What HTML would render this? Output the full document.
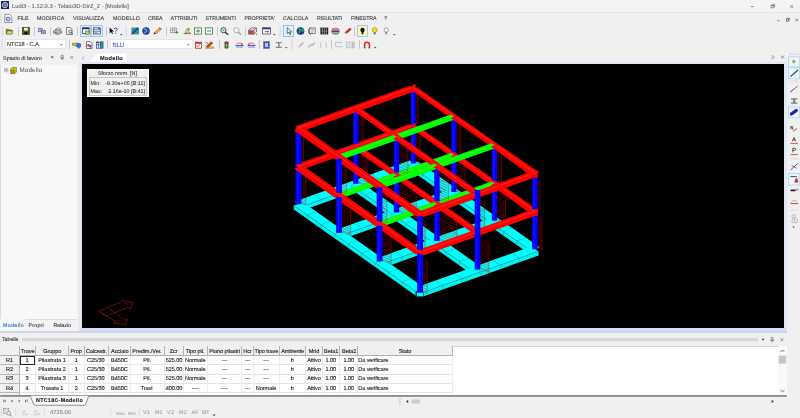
<!DOCTYPE html>
<html lang="it"><head><meta charset="utf-8"><title>Ludi3 - 1.12.0.3 - Telaio3D-DirZ_2 - [Modello]</title>
<style>
html,body{margin:0;padding:0;}
body{width:800px;height:418px;overflow:hidden;position:relative;background:#f0f0f1;font-family:"Liberation Sans",sans-serif;text-rendering:geometricPrecision;-webkit-font-smoothing:antialiased;}
div,span,svg,b,i{position:absolute;}
.t{white-space:pre;margin:0;padding:0;-webkit-text-stroke:0.12px currentColor;}
svg{overflow:visible;}
#wrap{left:0;top:0;width:800px;height:418px;overflow:hidden;will-change:transform;}
</style></head><body><div id="wrap">

<div style="left:0px;top:0px;width:800px;height:12.5px;background:#f4f4f5;"></div>
<div style="left:0px;top:12px;width:800px;height:0.8px;background:#e2e6f0;"></div>
<svg style="left:1px;top:1px" width="8" height="8" viewBox="0 0 8 8"><rect width="8" height="8" fill="#1c2466"/><circle cx="4" cy="4" r="2.6" fill="none" stroke="#d8dcf4" stroke-width="0.9"/><path d="M1.2 4H6.8M4 1.2V6.8" stroke="#d8dcf4" stroke-width="0.6"/></svg>
<span class="t" style="left:12px;top:3px;font-size:5.80px;line-height:8px;color:#6a6a6a;letter-spacing:0.023px;">Ludi3 - 1.12.0.3 - Telaio3D-DirZ_2 - [Modello]</span>
<svg style="left:740px;top:0" width="60" height="12" viewBox="0 0 60 12"><g stroke="#555" stroke-width="0.6" fill="none"><path d="M11 6.6h3"/><rect x="31" y="5.3" width="2.6" height="2.6"/><path d="M32 5.3v-0.9h2.6v2.6h-1"/><path d="M50.2 5l3 3M53.2 5l-3 3"/></g></svg>
<div style="left:0px;top:12.5px;width:800px;height:12.5px;background:#f0f0f1;"></div>
<svg style="left:0;top:13px" width="3" height="12" viewBox="0 0 3 12"><path d="M1 1v10" stroke="#b8b8c4" stroke-width="0.8" stroke-dasharray="0.8 0.8"/></svg>
<svg style="left:3.5px;top:14px" width="9" height="9" viewBox="0 0 9 9"><path d="M0.8 0.5h4.8l2.2 2.2v5.8h-7z" fill="#fff" stroke="#555" stroke-width="0.6"/><circle cx="4.2" cy="5" r="2" fill="#c8cdf0" stroke="#2a3490" stroke-width="0.7"/></svg>
<span class="t" style="left:17.6039px;top:15px;font-size:5.30px;line-height:8px;color:#444444;letter-spacing:-0.100px;">FILE</span>
<span class="t" style="left:37px;top:15px;font-size:5.30px;line-height:8px;color:#444444;letter-spacing:0.199px;">MODIFICA</span>
<span class="t" style="left:73px;top:15px;font-size:5.30px;line-height:8px;color:#444444;letter-spacing:0.066px;">VISUALIZZA</span>
<span class="t" style="left:113px;top:15px;font-size:5.30px;line-height:8px;color:#444444;letter-spacing:0.155px;">MODELLO</span>
<span class="t" style="left:148.087px;top:15px;font-size:5.30px;line-height:8px;color:#444444;letter-spacing:-0.100px;">CREA</span>
<span class="t" style="left:170.5px;top:15px;font-size:5.30px;line-height:8px;color:#444444;">ATTRIBUTI</span>
<span class="t" style="left:205.5px;top:15px;font-size:5.30px;line-height:8px;color:#444444;letter-spacing:-0.046px;">STRUMENTI</span>
<span class="t" style="left:244.377px;top:15px;font-size:5.30px;line-height:8px;color:#444444;letter-spacing:-0.100px;">PROPRIETA&#x27;</span>
<span class="t" style="left:283px;top:15px;font-size:5.30px;line-height:8px;color:#444444;letter-spacing:0.108px;">CALCOLA</span>
<span class="t" style="left:316.994px;top:15px;font-size:5.30px;line-height:8px;color:#444444;letter-spacing:-0.100px;">RISULTATI</span>
<span class="t" style="left:351.046px;top:15px;font-size:5.30px;line-height:8px;color:#444444;letter-spacing:-0.100px;">FINESTRA</span>
<span class="t" style="left:384.326px;top:15px;font-size:5.30px;line-height:8px;color:#444444;letter-spacing:-0.100px;">?</span>
<svg style="left:770px;top:14px" width="30" height="12" viewBox="0 0 30 12"><g stroke="#444" stroke-width="0.6" fill="none"><path d="M7.3 6.6h2.4"/><rect x="16.4" y="5" width="2.2" height="2.2"/><path d="M17.2 5v-0.8h2.2v2.2h-0.8"/><path d="M25.3 4.6l2.6 2.6M27.9 4.6l-2.6 2.6"/></g></svg>
<div style="left:0px;top:25px;width:800px;height:26.5px;background:#f0f0f1;"></div>
<svg style="left:1px;top:26px" width="3" height="11" viewBox="0 0 3 11"><path d="M1.2 0.5v10" stroke="#b4b4c0" stroke-width="0.9" stroke-dasharray="0.8 0.8"/></svg>
<svg style="left:1px;top:39px" width="3" height="11" viewBox="0 0 3 11"><path d="M1.2 0.5v10" stroke="#b4b4c0" stroke-width="0.9" stroke-dasharray="0.8 0.8"/></svg>
<div style="left:18px;top:26.5px;width:0.5px;height:9px;background:#c6c6d0;"></div>
<div style="left:34px;top:26.5px;width:0.5px;height:9px;background:#c6c6d0;"></div>
<div style="left:49.5px;top:26.5px;width:0.5px;height:9px;background:#c6c6d0;"></div>
<div style="left:76.5px;top:26.5px;width:0.5px;height:9px;background:#c6c6d0;"></div>
<div style="left:105.5px;top:26.5px;width:0.5px;height:9px;background:#c6c6d0;"></div>
<svg style="left:6px;top:26.8px" width="7" height="8" viewBox="0 0 7 8"><path d="M0.3 2.2h2.2l0.6 0.8h3v4h-5.8z" fill="#8a8420" stroke="#3c3a10" stroke-width="0.5"/><path d="M1.5 4h5.4l-1.2 3h-5.4z" fill="#e8df60" stroke="#3c3a10" stroke-width="0.4"/></svg>
<svg style="left:22px;top:26.8px" width="8" height="8" viewBox="0 0 8 8"><rect x="0.4" y="0.6" width="7" height="6.8" fill="#5d5a14" stroke="#1c1c08" stroke-width="0.6"/><rect x="2" y="0.9" width="3.8" height="2.6" fill="#f0f0f0"/><rect x="2.4" y="5" width="3" height="2.2" fill="#111"/></svg>
<svg style="left:37.5px;top:26.8px" width="8.5" height="8" viewBox="0 0 8.5 8"><rect x="0.6" y="1.2" width="3.6" height="3.6" fill="#e8ecff" stroke="#28306c" stroke-width="0.5"/><rect x="3.6" y="3.2" width="3.8" height="3.6" fill="#c8d2ff" stroke="#28306c" stroke-width="0.5"/><path d="M1.4 2.4h2M1.4 3.4h1.6M4.4 4.6h2.2M4.4 5.6h2.2" stroke="#28306c" stroke-width="0.45"/></svg>
<svg style="left:53px;top:26.8px" width="9" height="8" viewBox="0 0 9 8"><path d="M2.2 2.4l3-1.6 3 1.2-3 1.8z" fill="#fff" stroke="#444" stroke-width="0.5"/><path d="M0.5 4l4.2-1.6 3.8 1.6v2l-4 1.6-4-1.6z" fill="#b8b8b8" stroke="#333" stroke-width="0.5"/><path d="M2 5.2l2.6 1" stroke="#d02020" stroke-width="0.8"/></svg>
<svg style="left:65.5px;top:26.8px" width="7.5" height="8" viewBox="0 0 7.5 8"><path d="M0.5 0.5h4l1.5 1.5v5.5h-5.5z" fill="#fff" stroke="#333" stroke-width="0.6"/><circle cx="4.2" cy="4.6" r="1.6" fill="#d8ecff" stroke="#222" stroke-width="0.6"/><path d="M5.4 5.8l1.6 1.6" stroke="#222" stroke-width="0.8"/></svg>
<div style="left:79.5px;top:25.2px;width:11.3px;height:11.4px;background:#e0eefb;border:0.6px solid #9ccaf0;box-sizing:border-box;"></div>
<div style="left:90.5px;top:25.2px;width:12px;height:11.4px;background:#e0eefb;border:0.6px solid #9ccaf0;box-sizing:border-box;"></div>
<svg style="left:81.5px;top:26.8px" width="8" height="8" viewBox="0 0 8 8"><rect x="0.5" y="0.8" width="6.6" height="5.6" fill="#fff" stroke="#1a2050" stroke-width="0.7"/><rect x="0.5" y="0.8" width="6.6" height="1.4" fill="#1a2050"/><rect x="3.6" y="4" width="3.4" height="3.2" fill="#e0d040" stroke="#4a4410" stroke-width="0.5"/></svg>
<svg style="left:92.5px;top:26.8px" width="8" height="8" viewBox="0 0 8 8"><rect x="0.5" y="0.8" width="6.8" height="6.2" fill="#e8e8f4" stroke="#2a2f66" stroke-width="0.7"/><path d="M0.8 2.6h6.4M0.8 4.4h6.4" stroke="#2a2f66" stroke-width="0.5"/><path d="M1.4 5.8h3" stroke="#d03030" stroke-width="0.7"/><rect x="5" y="1.2" width="2" height="1" fill="#4050b0"/></svg>
<svg style="left:108.5px;top:26.8px" width="9" height="8" viewBox="0 0 9 8"><path d="M0.6 0.6v5.6l1.5-1.3 1 2.2 0.9-0.4-1-2.1h2z" fill="#111"/><path d="M5.2 2.2c0-1.6 3-1.6 3 0 0 1.2-1.5 1.2-1.5 2.4M6.7 5.6v1" stroke="#2838a8" stroke-width="1" fill="none"/></svg>
<svg style="left:119.7px;top:33.5px" width="2.6" height="1.6" viewBox="0 0 2.6 1.6"><path d="M0 0h2.6L1.3 1.5z" fill="#555"/></svg>
<svg style="left:125px;top:26px" width="3" height="11" viewBox="0 0 3 11"><path d="M1.2 0.5v10" stroke="#b4b4c0" stroke-width="0.9" stroke-dasharray="0.8 0.8"/></svg>
<svg style="left:130.5px;top:26.8px" width="8.5" height="8" viewBox="0 0 8.5 8"><rect x="0.4" y="0.6" width="7.6" height="6.8" fill="#2a9a90"/><path d="M1 7l6-6" stroke="#2030c0" stroke-width="1.6"/><path d="M0.6 7.4l1.6-0.4-1.2-1.2z" fill="#e03030"/></svg>
<svg style="left:142px;top:26.8px" width="8" height="8" viewBox="0 0 8 8"><circle cx="4" cy="4" r="3.5" fill="#2840c8" stroke="#101850" stroke-width="0.5"/><path d="M2 2.5c1.5-1 3 0 2.5 1.5s-2 1-2.5 2.2" stroke="#38c0c0" stroke-width="1.2" fill="none"/><path d="M5.5 3.5l2 0.4-1 1.8z" fill="#e03030"/></svg>
<svg style="left:153px;top:26.8px" width="9" height="8" viewBox="0 0 9 8"><path d="M0.6 7.4l0.8-2.2 1.5 1.4z" fill="#222"/><path d="M1.6 5.4l5.4-4.8 1.4 1.4-5.3 4.8z" fill="#e8c838" stroke="#b02020" stroke-width="0.6"/><path d="M6.4 1.2l1.4 1.4" stroke="#c02020" stroke-width="1"/></svg>
<div style="left:166px;top:26.5px;width:0.5px;height:9px;background:#c6c6d0;"></div>
<svg style="left:169.5px;top:26.8px" width="8.5" height="8" viewBox="0 0 8.5 8"><rect x="0.5" y="1" width="6" height="4.6" fill="#f4f4f4" stroke="#333" stroke-width="0.6" stroke-dasharray="0.9 0.6"/><path d="M2.5 1v4.6M4.5 1v4.6M0.5 3.3h6" stroke="#555" stroke-width="0.4"/><path d="M5.4 5.4h2.8M6.8 4v2.8" stroke="#1a8a2a" stroke-width="0.9"/></svg>
<svg style="left:182.5px;top:26.8px" width="8.5" height="8" viewBox="0 0 8.5 8"><path d="M0.6 6.6h7.4" stroke="#7a8a20" stroke-width="1"/><path d="M2.2 6l1.4-3.6 2 1-0.8 2.6z" fill="#e8e8d0" stroke="#444" stroke-width="0.5"/><circle cx="5.4" cy="2.2" r="1.1" fill="#e0c030" stroke="#6a5a10" stroke-width="0.4"/><path d="M6 5l2 1.4" stroke="#c03030" stroke-width="0.7"/></svg>
<svg style="left:194px;top:26.8px" width="8" height="8" viewBox="0 0 8 8"><rect x="0.5" y="0.9" width="7" height="6.2" fill="#f4fff4" stroke="#2a2a2a" stroke-width="0.6"/><path d="M2 4h4M4 2.2v3.6" stroke="#18a030" stroke-width="1"/></svg>
<svg style="left:205px;top:26.8px" width="8" height="8" viewBox="0 0 8 8"><rect x="0.5" y="0.9" width="7" height="6.2" fill="#f4fff4" stroke="#2a2a2a" stroke-width="0.6"/><path d="M2 4h4" stroke="#18a030" stroke-width="1"/></svg>
<div style="left:217px;top:26.5px;width:0.5px;height:9px;background:#c6c6d0;"></div>
<svg style="left:220px;top:26.8px" width="9" height="8" viewBox="0 0 9 8"><circle cx="3.4" cy="3.2" r="2.6" fill="#e8f4ff" stroke="#222" stroke-width="0.8"/><path d="M5.2 5.2l3 2.6" stroke="#222" stroke-width="1.2"/><path d="M2.2 3.2h2.4M3.4 2v2.4" stroke="#208030" stroke-width="0.5"/></svg>
<svg style="left:232.5px;top:26.8px" width="8.5" height="8" viewBox="0 0 8.5 8"><circle cx="3.4" cy="3.2" r="2.6" fill="#f4f4f4" stroke="#9a9a9a" stroke-width="0.8"/><path d="M5.2 5.2l3 2.6" stroke="#9a9a9a" stroke-width="1.2"/></svg>
<div style="left:244.5px;top:26.5px;width:0.5px;height:9px;background:#c6c6d0;"></div>
<svg style="left:247.5px;top:26.8px" width="10" height="8" viewBox="0 0 10 8"><path d="M0.6 3.2l2.4-2.2h5.4v4l-2.4 2.2h-5.4z" fill="#f0f0f0" stroke="#222" stroke-width="0.6"/><path d="M0.6 3.2h5.4v4M6 3.2l2.4-2.2" stroke="#222" stroke-width="0.5" fill="none"/><rect x="0.9" y="3.5" width="4.8" height="3.4" fill="#c04040"/><path d="M8.2 6.6l1.2 1.2h-1.2z" fill="#222"/></svg>
<svg style="left:262px;top:26.8px" width="9.5" height="8" viewBox="0 0 9.5 8"><rect x="0.5" y="0.8" width="8" height="6.2" fill="#f4f4ff" stroke="#222" stroke-width="0.6"/><rect x="0.5" y="0.8" width="8" height="1.4" fill="#28307a"/><path d="M3 4.6h3.4l-1-1M6.4 4.6l-1 1" stroke="#28307a" stroke-width="0.7" fill="none"/></svg>
<svg style="left:273.2px;top:33.5px" width="2.6" height="1.6" viewBox="0 0 2.6 1.6"><path d="M0 0h2.6L1.3 1.5z" fill="#555"/></svg>
<svg style="left:279px;top:26px" width="3" height="11" viewBox="0 0 3 11"><path d="M1.2 0.5v10" stroke="#b4b4c0" stroke-width="0.9" stroke-dasharray="0.8 0.8"/></svg>
<div style="left:282.5px;top:25.2px;width:11.5px;height:11.8px;background:#e4f0fb;border:0.6px solid #8cc0ec;box-sizing:border-box;"></div>
<svg style="left:285.5px;top:26.8px" width="6.5" height="8" viewBox="0 0 6.5 8"><path d="M1.2 0.6v6l1.5-1.4 1.1 2.4 0.9-0.4-1.1-2.3h2.1z" fill="#fff" stroke="#111" stroke-width="0.6"/></svg>
<svg style="left:295.5px;top:26.8px" width="9" height="8" viewBox="0 0 9 8"><circle cx="4.5" cy="4" r="3.6" fill="#1838b0" stroke="#081040" stroke-width="0.5"/><path d="M2.4 2.2c1.4-0.6 2.2 0.4 1.8 1.4s-1.4 1.2-1 2.6M5.6 1.6c1 0.6 1.8 1.8 1 3.2" stroke="#30c848" stroke-width="1.3" fill="none"/></svg>
<svg style="left:307.5px;top:26.8px" width="8" height="8" viewBox="0 0 8 8"><rect x="1.6" y="1" width="5.6" height="5.6" fill="#f6f6f6" stroke="#333" stroke-width="0.6"/><path d="M0.6 2.4l2-1.8M0.6 2.4v3.4l2 1.8" stroke="#333" stroke-width="0.6" fill="none"/><path d="M3 2.6h3M3 4h3M3 5.4h2" stroke="#666" stroke-width="0.5"/></svg>
<svg style="left:319.5px;top:26.8px" width="8.5" height="8" viewBox="0 0 8.5 8"><rect x="0.4" y="0.6" width="7.8" height="6.8" fill="#141414"/><path d="M2.3 0.6v6.8M4.3 0.6v6.8M6.3 0.6v6.8" stroke="#e8e8e8" stroke-width="0.6"/><path d="M0.4 4h7.8" stroke="#bbb" stroke-width="0.4"/></svg>
<svg style="left:330.5px;top:26.8px" width="9" height="8" viewBox="0 0 9 8"><ellipse cx="4.5" cy="4.2" rx="4" ry="3.2" fill="#e8e0d0" stroke="#333" stroke-width="0.5"/><path d="M1.2 3h6.6" stroke="#d02828" stroke-width="1.2"/><path d="M1 4.6h7" stroke="#2838c0" stroke-width="1.2"/><path d="M2 6.2h5" stroke="#20a040" stroke-width="1"/></svg>
<svg style="left:342.5px;top:26.8px" width="8.5" height="8" viewBox="0 0 8.5 8"><path d="M0.8 7l2.4-1.2-1.2-1.2z" fill="#e8c030"/><path d="M2.4 5l4.6-4 1.2 1.4-4.6 4z" fill="#d82020" stroke="#801010" stroke-width="0.4"/></svg>
<div style="left:354px;top:26.5px;width:0.5px;height:9px;background:#c6c6d0;"></div>
<div style="left:356.5px;top:25.2px;width:11px;height:11.8px;background:#fdf4b0;border:0.6px solid #9ccaf0;box-sizing:border-box;"></div>
<svg style="left:358.5px;top:26.8px" width="7" height="8" viewBox="0 0 7 8"><circle cx="3.5" cy="3" r="2.2" fill="#141414"/><rect x="2.6" y="4.6" width="1.8" height="2.6" fill="#141414"/></svg>
<svg style="left:370.5px;top:26.8px" width="7.5" height="8" viewBox="0 0 7.5 8"><circle cx="3.7" cy="3" r="2.5" fill="#f4e020" stroke="#8a7a10" stroke-width="0.5"/><rect x="2.8" y="5.2" width="1.8" height="2.2" fill="#666"/></svg>
<svg style="left:382.5px;top:26.8px" width="6.5" height="8" viewBox="0 0 6.5 8"><circle cx="3.2" cy="3" r="2.2" fill="#f4f4f4" stroke="#777" stroke-width="0.6"/><rect x="2.4" y="5" width="1.6" height="2.2" fill="#777"/></svg>
<svg style="left:392.7px;top:33.5px" width="2.6" height="1.6" viewBox="0 0 2.6 1.6"><path d="M0 0h2.6L1.3 1.5z" fill="#555"/></svg>
<div style="left:4.5px;top:39.4px;width:61.5px;height:9.3px;background:#ffffff;border:0.5px solid #e4e4ea;box-sizing:border-box;"></div>
<span class="t" style="left:7px;top:41px;font-size:5.60px;line-height:8px;color:#3a3a3a;letter-spacing:-0.009px;">NTC18 - C.A.</span>
<svg style="left:60.2px;top:43.699999999999996px" width="2.6" height="1.6" viewBox="0 0 2.6 1.6"><path d="M0 0h2.6L1.3 1.5z" fill="#777"/></svg>
<div style="left:68.5px;top:40px;width:0.5px;height:9px;background:#c6c6d0;"></div>
<div style="left:106.5px;top:40px;width:0.5px;height:9px;background:#c6c6d0;"></div>
<svg style="left:72px;top:40.8px" width="9.5" height="8" viewBox="0 0 9.5 8"><path d="M0.5 2.2h5v2h-1v1h-1.2v-1h-2.8z" fill="#e0c838" stroke="#5a4a10" stroke-width="0.5"/><path d="M5 2.2l3.6 0.6v2.8l-1.8 2-1.8-2z" fill="#2878d8" stroke="#103870" stroke-width="0.5"/></svg>
<svg style="left:85.5px;top:40.8px" width="6.5" height="8" viewBox="0 0 6.5 8"><path d="M0.5 0.6h3.8l1.7 1.7v5.2h-5.5z" fill="#fff" stroke="#222" stroke-width="0.6"/><rect x="1.4" y="3" width="2" height="2.6" fill="#d83030"/><rect x="3.4" y="4" width="1.8" height="2.6" fill="#3048c0"/></svg>
<svg style="left:96px;top:40.8px" width="7.5" height="8" viewBox="0 0 7.5 8"><rect x="0.5" y="1.2" width="4" height="6" fill="#f0f2ff" stroke="#1a2060" stroke-width="0.6"/><path d="M2.5 1.2v6M0.5 3.8h4" stroke="#2838b0" stroke-width="0.6"/><rect x="4.5" y="0.8" width="2.6" height="6.6" fill="#2a9a98" stroke="#10403c" stroke-width="0.5"/><rect x="1" y="0.3" width="1" height="1.4" fill="#1a2060"/></svg>
<div style="left:110px;top:39.4px;width:82.5px;height:9.3px;background:#ffffff;border:0.5px solid #e4e4ea;box-sizing:border-box;"></div>
<span class="t" style="left:112.564px;top:42px;font-size:6.00px;line-height:8px;color:#4048d8;letter-spacing:-0.100px;">SLU</span>
<svg style="left:187.2px;top:43.699999999999996px" width="2.6" height="1.6" viewBox="0 0 2.6 1.6"><path d="M0 0h2.6L1.3 1.5z" fill="#777"/></svg>
<svg style="left:195px;top:40.8px" width="7" height="8" viewBox="0 0 7 8"><rect x="0.5" y="1.2" width="6" height="6" fill="#fff" stroke="#801818" stroke-width="0.7"/><rect x="0.5" y="1.2" width="6" height="1.6" fill="#d02828"/><path d="M1.6 4.2l1.2 1.6 2.4-2.6" stroke="#d02828" stroke-width="0.8" fill="none"/></svg>
<svg style="left:205px;top:40.8px" width="9" height="8" viewBox="0 0 9 8"><path d="M0.6 7.4h8v-1.6h-8z" fill="#e8d060" stroke="#6a5a10" stroke-width="0.4"/><path d="M1.4 5.2l4.8-4.6 1.6 1.6-4.8 4.4z" fill="#d84020" stroke="#601808" stroke-width="0.4"/><path d="M0.8 0.8l2 2" stroke="#222" stroke-width="0.7"/></svg>
<div style="left:219px;top:40px;width:0.5px;height:9px;background:#c6c6d0;"></div>
<svg style="left:224px;top:40.8px" width="5" height="8" viewBox="0 0 5 8"><rect x="0.6" y="0.4" width="3.8" height="7.2" rx="0.8" fill="#3a3a3a"/><circle cx="2.5" cy="1.9" r="1" fill="#e83030"/><circle cx="2.5" cy="4" r="1" fill="#e8d030"/><circle cx="2.5" cy="6.1" r="1" fill="#30c040"/></svg>
<svg style="left:234.5px;top:40.8px" width="9" height="8" viewBox="0 0 9 8"><path d="M0.5 4.6h8" stroke="#2848d0" stroke-width="1"/><path d="M1.5 3.2c1.5-1.6 4-1.6 6 0M6.6 2l1 1.3-1.6 0.3" stroke="#d83030" stroke-width="0.7" fill="none"/><path d="M1 6.2h7" stroke="#2848d0" stroke-width="0.5"/></svg>
<svg style="left:246.5px;top:40.8px" width="9" height="8" viewBox="0 0 9 8"><path d="M0.5 4.6h8" stroke="#2848d0" stroke-width="1"/><path d="M1.5 3.2c1.5-1.6 4-1.6 6 0M2.4 2l-1 1.3 1.6 0.3" stroke="#d83030" stroke-width="0.7" fill="none"/><path d="M1 6.2h7" stroke="#2848d0" stroke-width="0.5"/></svg>
<div style="left:259px;top:40px;width:0.5px;height:9px;background:#c6c6d0;"></div>
<svg style="left:262.5px;top:40.8px" width="7" height="8" viewBox="0 0 7 8"><rect x="0.6" y="0.6" width="5.8" height="6.8" fill="#3a50c0" stroke="#7a7a8a" stroke-width="0.8"/><rect x="2" y="2" width="3" height="4" fill="#b8c4f4"/></svg>
<svg style="left:275px;top:40.8px" width="7.5" height="8" viewBox="0 0 7.5 8"><path d="M0.8 1h6v1.2h-2.2v3.6h2.2v1.2h-6v-1.2h2.2v-3.6h-2.2z" fill="#8a8a8a"/></svg>
<svg style="left:284.7px;top:47.099999999999994px" width="2.6" height="1.6" viewBox="0 0 2.6 1.6"><path d="M0 0h2.6L1.3 1.5z" fill="#555"/></svg>
<svg style="left:291px;top:39px" width="3" height="11" viewBox="0 0 3 11"><path d="M1.2 0.5v10" stroke="#b4b4c0" stroke-width="0.9" stroke-dasharray="0.8 0.8"/></svg>
<svg style="left:296.5px;top:40.8px" width="7.5" height="8" viewBox="0 0 7.5 8"><path d="M1 7l1-2.6 3.6-3.6 1.4 1.4-3.6 3.6z" fill="#c0c0c8"/></svg>
<svg style="left:307px;top:40.8px" width="8.5" height="8" viewBox="0 0 8.5 8"><path d="M0.8 7l0.8-2.4 2.4-2 1 1-2 2.6z" fill="#c0c0c8"/><path d="M4.4 5.4l0.8-2.4 2.2-2 1 1-1.8 2.6z" fill="#c0c0c8"/></svg>
<svg style="left:320px;top:40.8px" width="7" height="8" viewBox="0 0 7 8"><path d="M1.4 1.2c-0.8 0-0.8 0.8-0.8 1.4v3c0 0.8 0 1.4 0.8 1.4M5.6 1.2c0.8 0 0.8 0.8 0.8 1.4v3c0 0.8 0 1.4-0.8 1.4" stroke="#c0c0c8" stroke-width="0.9" fill="none"/></svg>
<div style="left:331px;top:40px;width:0.5px;height:9px;background:#c6c6d0;"></div>
<svg style="left:335px;top:40.8px" width="8" height="8" viewBox="0 0 8 8"><path d="M0.6 1.4h6.8M0.6 1.4v4.2h5" stroke="#c0c0c8" stroke-width="0.9" fill="none"/><path d="M5.6 4.4l2 1.2-2 1.2z" fill="#c0c0c8"/></svg>
<svg style="left:346px;top:40.8px" width="9" height="8" viewBox="0 0 9 8"><rect x="0.6" y="1" width="7.6" height="5.8" fill="#dedee6" stroke="#c0c0c8" stroke-width="0.8"/><rect x="6" y="1" width="2.2" height="5.8" fill="#c0c0c8"/></svg>
<div style="left:358.5px;top:40px;width:0.5px;height:9px;background:#c6c6d0;"></div>
<svg style="left:362.5px;top:40.8px" width="8" height="8" viewBox="0 0 8 8"><path d="M1.6 6.6v-3a2.4 2.4 0 0 1 4.8 0v3" stroke="#d82828" stroke-width="1.5" fill="none"/><path d="M0.8 6.8h1.7M5.5 6.8h1.7" stroke="#333" stroke-width="1"/></svg>
<svg style="left:373.7px;top:47.099999999999994px" width="2.6" height="1.6" viewBox="0 0 2.6 1.6"><path d="M0 0h2.6L1.3 1.5z" fill="#555"/></svg>
<div style="left:0px;top:51.5px;width:77px;height:12.5px;background:#f0f0f1;"></div>
<span class="t" style="left:3px;top:55px;font-size:5.40px;line-height:8px;color:#3a3a3a;letter-spacing:0.036px;">Spazio di lavoro</span>
<svg style="left:48px;top:53px" width="28" height="9" viewBox="0 0 28 9"><path d="M2.6 3.6h3.2l-1.6 2z" fill="#444"/><g stroke="#555" stroke-width="0.55" fill="none"><path d="M13.2 2.4h2v2.8h-2zM12.4 5.2h3.6M14.2 5.2v2"/><path d="M22.2 3l3 3M25.2 3l-3 3"/></g></svg>
<div style="left:0px;top:64.5px;width:76.7px;height:254.6px;background:#f8f8f9;border-left:0.6px solid #d8dce8;box-sizing:border-box;"></div>
<div style="left:76.5px;top:51.5px;width:0.5px;height:280px;background:#dcdce6;"></div>
<div style="left:77px;top:51.5px;width:2.4px;height:280px;background:#f0f0f1;"></div>
<svg style="left:3.5px;top:68px" width="14" height="6" viewBox="0 0 14 6"><rect x="0.3" y="0.3" width="3.6" height="3.6" fill="#fff" stroke="#9a9a9a" stroke-width="0.5"/><path d="M1.1 2.1h2M2.1 1.1v2" stroke="#333" stroke-width="0.5"/><path d="M4 2.1h2" stroke="#bbb" stroke-width="0.4" stroke-dasharray="0.5 0.5"/><path d="M6.6 1l1.6-1.6h4.2v4.6l-1.4 1.6h-4.4z" fill="#cfc41c" stroke="#4a440c" stroke-width="0.5"/><path d="M8 5.4v-2.6a1 1 0 0 1 2 0v2.6" stroke="#4a440c" stroke-width="0.6" fill="none"/></svg>
<span class="t" style="left:19.5px;top:67px;font-size:6.20px;line-height:8px;color:#4a4a4a;letter-spacing:0.184px;-webkit-text-stroke:0;">Modello</span>
<div style="left:0px;top:319px;width:76.7px;height:11.6px;background:#f3f3f5;border-top:0.5px solid #dcdce2;box-sizing:border-box;"></div>
<div style="left:0px;top:319px;width:25px;height:11.6px;background:#f8f8f9;"></div>
<span class="t" style="left:3px;top:322px;font-size:5.30px;line-height:8px;color:#2a6ab8;letter-spacing:0.349px;">Modello</span>
<span class="t" style="left:28.5px;top:322px;font-size:5.30px;line-height:8px;color:#3a3a3a;letter-spacing:0.227px;">Propri</span>
<span class="t" style="left:53.5px;top:322px;font-size:5.30px;line-height:8px;color:#3a3a3a;letter-spacing:-0.025px;">Relazio</span>
<div style="left:82.5px;top:51.5px;width:705px;height:13px;background:#f0f0f1;"></div>
<svg style="left:82px;top:51.5px" width="50" height="13" viewBox="0 0 50 13"><path d="M1.8 4.4l-1.4 1.6 1.4 1.6" stroke="#777" stroke-width="0.6" fill="none"/><path d="M5.2 11C8.5 10.8 12 1 16 1h28.4c0.8 0 0.8 0.4 0.8 1v9z" fill="#ffffff" stroke="#dcdce4" stroke-width="0.5"/></svg>
<span class="t" style="left:100px;top:55px;font-size:5.60px;line-height:8px;color:#1a1a1a;letter-spacing:0.264px;font-weight:bold;">Modello</span>
<svg style="left:768px;top:53px" width="20" height="9" viewBox="0 0 20 9"><path d="M4.4 2.4l2.2 1.9-2.2 1.9z" fill="none" stroke="#777" stroke-width="0.5"/><path d="M13 2.6l3 3M16 2.6l-3 3" stroke="#555" stroke-width="0.6"/></svg>
<div style="left:79.4px;top:62.4px;width:707.9px;height:268.2px;background:#e0e8f6;"></div>
<div style="left:79.4px;top:327.7px;width:707.9px;height:2.9px;background:#d6dff0;"></div>
<div style="left:82.2px;top:64px;width:702.2px;height:263.7px;background:#000000;"></div>
<div style="left:86.8px;top:68.8px;width:62.2px;height:28.4px;background:#f0f0f0;border:0.5px solid #fafafa;box-sizing:border-box;"></div>
<div style="left:88.5px;top:77px;width:58.8px;height:19px;border:0.5px solid #c6c6c6;box-sizing:border-box;"></div>
<span class="t" style="left:98px;top:70px;font-size:5.40px;line-height:8px;color:#333;letter-spacing:-0.019px;-webkit-text-stroke:0.08px currentColor;">Sforzo norm. [N]</span>
<span class="t" style="left:90.5px;top:80px;font-size:5.30px;line-height:8px;color:#333;letter-spacing:0.049px;-webkit-text-stroke:0.08px currentColor;">Min:   -9.30e+05 [B:11]</span>
<span class="t" style="left:90.5px;top:88px;font-size:5.30px;line-height:8px;color:#333;letter-spacing:0.039px;-webkit-text-stroke:0.08px currentColor;">Max:    2.16e-10 [B:41]</span>
<svg style="left:0;top:0" width="800" height="418" viewBox="0 0 800 418"><g fill="none" stroke="#b01414" stroke-width="0.6"><path d="M98.7 311.2L120.5 302.3L121.6 300.8L126 301L133.1 302.7L130.2 309L127.3 307.6L106.5 315.9Z"/><path d="M108.7 308L124.5 320.2L127.3 318.8L125.9 324.5L113.7 323.4L115.9 321.4L101.5 313"/><path d="M124.5 303.6l3.6 0.6M116.5 321.6l3-1"/></g></svg>
<div style="left:787px;top:51.5px;width:13px;height:280px;background:#f0f0f1;"></div>
<svg style="left:787px;top:52px" width="13" height="180" viewBox="0 0 13 180"><path d="M2 2.2h10" stroke="#b4b4c0" stroke-width="0.9" stroke-dasharray="0.8 0.8"/><rect x="1.6" y="4.8" width="11.2" height="10.2" fill="#eef4fc" stroke="#9cc6ee" stroke-width="0.6"/><circle cx="6.8" cy="9.6" r="1.3" fill="#d8c820" stroke="#444" stroke-width="0.4"/><rect x="1.6" y="15.8" width="11.2" height="11" fill="#eef4fc" stroke="#9cc6ee" stroke-width="0.6"/><path d="M3.4 24.6l7.6-6.6" stroke="#0a5048" stroke-width="1.1"/><path d="M3 29.2h8.6" stroke="#c6c6d0" stroke-width="0.5"/><path d="M3.4 40l7.4-6" stroke="#6a48c0" stroke-width="0.9"/><path d="M3.4 40l2.4-2" stroke="#d03030" stroke-width="0.9"/><path d="M4 46.2h6.4v1.4h-2.2v2.8h2.2v1.4h-6.4v-1.4h2.2v-2.8h-2.2z" fill="#7a7a7a"/><rect x="1.6" y="55" width="11.2" height="10.8" fill="#eef4fc" stroke="#9cc6ee" stroke-width="0.6"/><path d="M4.4 62l5-3.6" stroke="#1a2aa0" stroke-width="3.2" stroke-linecap="round"/><path d="M3.8 77.4v-3.4l1.8 3.4v-3.4" stroke="#222" stroke-width="0.6" fill="none"/><path d="M6 79.4l4-3" stroke="#d03030" stroke-width="0.9"/><path d="M5.2 89.4l1.8-4 1.8 4M5.9 88h2.2" stroke="#222" stroke-width="0.7" fill="none"/><path d="M3.4 91.4h7.6" stroke="#d03030" stroke-width="0.8"/><path d="M5.8 100.4v-4.2h1.8a1.1 1.1 0 0 1 0 2.2h-1.8" stroke="#222" stroke-width="0.7" fill="none"/><path d="M3.4 102.6h7.6" stroke="#d03030" stroke-width="0.8"/><path d="M3 106.7h8.6" stroke="#c6c6d0" stroke-width="0.5"/><path d="M3.6 118l7-6.4" stroke="#2848d0" stroke-width="0.9"/><path d="M4.6 113.6l5 2.6" stroke="#d03030" stroke-width="0.8"/><rect x="1.6" y="121.6" width="11.2" height="11.4" fill="#eef4fc" stroke="#9cc6ee" stroke-width="0.6"/><path d="M3.4 124.6h6.4" stroke="#222" stroke-width="0.8"/><path d="M7.2 130.6l1.6-4.4h1.4l1.2 4.4z" fill="#d03030"/><path d="M3.6 138.4h5" stroke="#111" stroke-width="1.6"/><path d="M8.6 138.2c1.4-2 3-1 2.2 0.6" stroke="#d03030" stroke-width="0.8" fill="none"/><path d="M3.4 151.6h7.8" stroke="#d03030" stroke-width="0.9"/><path d="M4.6 150.4l1-1.6h3.4l1 1.6" stroke="#888" stroke-width="0.6" fill="none"/><path d="M3 158.2h8.6" stroke="#c6c6d0" stroke-width="0.5"/><path d="M5 163h3.6v2.4h-3.6zM6.6 165.4v1.6M5 167h5.4v3.6h-5.4zM7.6 167v3.6" stroke="#b0b0b8" stroke-width="0.7" fill="none"/><path d="M5.4 174.6h2.4l-1.2 1.6z" fill="#555"/></svg>
<div style="left:0px;top:330.6px;width:787.3px;height:2.2px;background:#ccd5ea;"></div>
<div style="left:0px;top:332.5px;width:800px;height:86px;background:#f0f0f1;"></div>
<span class="t" style="left:2px;top:336px;font-size:5.30px;line-height:8px;color:#3a3a3a;letter-spacing:-0.042px;">Tabelle</span>
<svg style="left:22px;top:337.6px" width="736" height="4" viewBox="0 0 736 4"><defs><pattern id="dp" width="1.6" height="1.6" patternUnits="userSpaceOnUse"><rect width="0.8" height="0.8" fill="#bcbcc8"/><rect x="0.8" y="0.8" width="0.8" height="0.8" fill="#bcbcc8"/></pattern></defs><rect width="736" height="3.2" fill="url(#dp)"/></svg>
<svg style="left:758px;top:335px" width="30" height="9" viewBox="0 0 30 9"><path d="M3.4 3.8h3.2l-1.6 2z" fill="#444"/><g stroke="#555" stroke-width="0.55" fill="none"><path d="M13.2 2.6h2v2.8h-2zM12.4 5.4h3.6M14.2 5.4v2"/><path d="M22.4 3.2l3 3M25.4 3.2l-3 3"/></g></svg>
<div style="left:0px;top:345.5px;width:787px;height:50.5px;background:#ffffff;border:0.6px solid #d4d4dc;box-sizing:border-box;border-bottom:0.8px solid #8a8a92;"></div>
<div style="left:0px;top:346px;width:452.5px;height:9.3px;background:#f0f0f0;"></div>
<div style="left:0px;top:355.3px;width:452.5px;height:0.5px;background:#b0b0b4;"></div>
<div style="left:0px;top:355.8px;width:19.5px;height:39.7px;background:#f0f0f0;"></div>
<div style="left:19px;top:346px;width:0.5px;height:9.3px;background:#b4b4b8;"></div>
<div style="left:34.5px;top:346px;width:0.5px;height:9.3px;background:#b4b4b8;"></div>
<div style="left:67.5px;top:346px;width:0.5px;height:9.3px;background:#b4b4b8;"></div>
<div style="left:83.5px;top:346px;width:0.5px;height:9.3px;background:#b4b4b8;"></div>
<div style="left:108px;top:346px;width:0.5px;height:9.3px;background:#b4b4b8;"></div>
<div style="left:129.5px;top:346px;width:0.5px;height:9.3px;background:#b4b4b8;"></div>
<div style="left:163.5px;top:346px;width:0.5px;height:9.3px;background:#b4b4b8;"></div>
<div style="left:182.5px;top:346px;width:0.5px;height:9.3px;background:#b4b4b8;"></div>
<div style="left:206.5px;top:346px;width:0.5px;height:9.3px;background:#b4b4b8;"></div>
<div style="left:241px;top:346px;width:0.5px;height:9.3px;background:#b4b4b8;"></div>
<div style="left:252.5px;top:346px;width:0.5px;height:9.3px;background:#b4b4b8;"></div>
<div style="left:279px;top:346px;width:0.5px;height:9.3px;background:#b4b4b8;"></div>
<div style="left:305px;top:346px;width:0.5px;height:9.3px;background:#b4b4b8;"></div>
<div style="left:321.5px;top:346px;width:0.5px;height:9.3px;background:#b4b4b8;"></div>
<div style="left:339px;top:346px;width:0.5px;height:9.3px;background:#b4b4b8;"></div>
<div style="left:356.5px;top:346px;width:0.5px;height:9.3px;background:#b4b4b8;"></div>
<div style="left:452px;top:346px;width:0.5px;height:9.3px;background:#b4b4b8;"></div>
<div style="left:19px;top:355.3px;width:0.5px;height:40.2px;background:#b0b0b4;"></div>
<div style="left:19.5px;top:364.3px;width:433px;height:0.5px;background:#e4e4e4;"></div>
<div style="left:0px;top:364.3px;width:19.5px;height:0.5px;background:#b8b8bc;"></div>
<div style="left:19.5px;top:373.5px;width:433px;height:0.5px;background:#e4e4e4;"></div>
<div style="left:0px;top:373.5px;width:19.5px;height:0.5px;background:#b8b8bc;"></div>
<div style="left:19.5px;top:382.7px;width:433px;height:0.5px;background:#e4e4e4;"></div>
<div style="left:0px;top:382.7px;width:19.5px;height:0.5px;background:#b8b8bc;"></div>
<div style="left:19.5px;top:391.9px;width:433px;height:0.5px;background:#e4e4e4;"></div>
<div style="left:0px;top:391.9px;width:19.5px;height:0.5px;background:#b8b8bc;"></div>
<div style="left:34.5px;top:355.8px;width:0.5px;height:39.7px;background:#ececec;"></div>
<div style="left:67.5px;top:355.8px;width:0.5px;height:39.7px;background:#ececec;"></div>
<div style="left:83.5px;top:355.8px;width:0.5px;height:39.7px;background:#ececec;"></div>
<div style="left:108px;top:355.8px;width:0.5px;height:39.7px;background:#ececec;"></div>
<div style="left:129.5px;top:355.8px;width:0.5px;height:39.7px;background:#ececec;"></div>
<div style="left:163.5px;top:355.8px;width:0.5px;height:39.7px;background:#ececec;"></div>
<div style="left:182.5px;top:355.8px;width:0.5px;height:39.7px;background:#ececec;"></div>
<div style="left:206.5px;top:355.8px;width:0.5px;height:39.7px;background:#ececec;"></div>
<div style="left:241px;top:355.8px;width:0.5px;height:39.7px;background:#ececec;"></div>
<div style="left:252.5px;top:355.8px;width:0.5px;height:39.7px;background:#ececec;"></div>
<div style="left:279px;top:355.8px;width:0.5px;height:39.7px;background:#ececec;"></div>
<div style="left:305px;top:355.8px;width:0.5px;height:39.7px;background:#ececec;"></div>
<div style="left:321.5px;top:355.8px;width:0.5px;height:39.7px;background:#ececec;"></div>
<div style="left:339px;top:355.8px;width:0.5px;height:39.7px;background:#ececec;"></div>
<div style="left:356.5px;top:355.8px;width:0.5px;height:39.7px;background:#ececec;"></div>
<div style="left:452px;top:355.8px;width:0.5px;height:39.7px;background:#ececec;"></div>
<span class="t" style="left:20.8471px;top:348px;font-size:5.60px;line-height:8px;color:#1c1c1c;letter-spacing:-0.100px;">Trave</span>
<span class="t" style="left:43.2616px;top:348px;font-size:5.60px;line-height:8px;color:#1c1c1c;letter-spacing:-0.100px;">Gruppo</span>
<span class="t" style="left:70.4359px;top:348px;font-size:5.60px;line-height:8px;color:#1c1c1c;letter-spacing:-0.100px;">Prop</span>
<span class="t" style="left:85.908px;top:348px;font-size:5.60px;line-height:8px;color:#1c1c1c;letter-spacing:-0.100px;">Calcestr.</span>
<span class="t" style="left:111px;top:348px;font-size:5.60px;line-height:8px;color:#1c1c1c;letter-spacing:-0.079px;">Acciaio</span>
<span class="t" style="left:132.3px;top:348px;font-size:5.60px;line-height:8px;color:#1c1c1c;letter-spacing:-0.100px;">Predim./Ver.</span>
<span class="t" style="left:169.657px;top:348px;font-size:5.60px;line-height:8px;color:#1c1c1c;letter-spacing:-0.100px;">Zcr</span>
<span class="t" style="left:185.85px;top:348px;font-size:5.60px;line-height:8px;color:#1c1c1c;letter-spacing:-0.100px;">Tipo pil.</span>
<span class="t" style="left:209.2px;top:348px;font-size:5.60px;line-height:8px;color:#1c1c1c;letter-spacing:-0.090px;">Piano pilastri</span>
<span class="t" style="left:243.246px;top:348px;font-size:5.60px;line-height:8px;color:#1c1c1c;letter-spacing:-0.100px;">Hcr</span>
<span class="t" style="left:254.555px;top:348px;font-size:5.60px;line-height:8px;color:#1c1c1c;letter-spacing:-0.100px;">Tipo trave</span>
<span class="t" style="left:281.172px;top:348px;font-size:5.60px;line-height:8px;color:#1c1c1c;letter-spacing:-0.100px;">Ambiente</span>
<span class="t" style="left:308.756px;top:348px;font-size:5.60px;line-height:8px;color:#1c1c1c;letter-spacing:-0.100px;">Mrid</span>
<span class="t" style="left:324.083px;top:348px;font-size:5.60px;line-height:8px;color:#1c1c1c;letter-spacing:-0.100px;">Beta1</span>
<span class="t" style="left:342.033px;top:348px;font-size:5.60px;line-height:8px;color:#1c1c1c;letter-spacing:-0.100px;">Beta2</span>
<span class="t" style="left:398.712px;top:348px;font-size:5.60px;line-height:8px;color:#1c1c1c;letter-spacing:-0.100px;">Stato</span>
<span class="t" style="left:6.02081px;top:357px;font-size:5.60px;line-height:8px;color:#1c1c1c;letter-spacing:-0.100px;">R1</span>
<span class="t" style="left:25.5929px;top:357px;font-size:5.60px;line-height:8px;color:#1c1c1c;letter-spacing:-0.100px;">1</span>
<span class="t" style="left:38.2px;top:357px;font-size:5.60px;line-height:8px;color:#1c1c1c;letter-spacing:-0.026px;">Pilastrata 1</span>
<span class="t" style="left:74.6929px;top:357px;font-size:5.60px;line-height:8px;color:#1c1c1c;letter-spacing:-0.100px;">1</span>
<span class="t" style="left:86.9718px;top:357px;font-size:5.60px;line-height:8px;color:#1c1c1c;letter-spacing:-0.100px;">C25/30</span>
<span class="t" style="left:111.039px;top:357px;font-size:5.60px;line-height:8px;color:#1c1c1c;letter-spacing:-0.100px;">B450C</span>
<span class="t" style="left:143.2px;top:357px;font-size:5.60px;line-height:8px;color:#1c1c1c;letter-spacing:0.005px;">Pil.</span>
<span class="t" style="left:165.687px;top:357px;font-size:5.60px;line-height:8px;color:#1c1c1c;letter-spacing:-0.100px;">525.00</span>
<span class="t" style="left:184.97px;top:357px;font-size:5.60px;line-height:8px;color:#1c1c1c;letter-spacing:-0.100px;">Normale</span>
<span class="t" style="left:221.7px;top:357px;font-size:5.60px;line-height:8px;color:#1c1c1c;letter-spacing:-0.065px;">---</span>
<span class="t" style="left:244.953px;top:357px;font-size:5.60px;line-height:8px;color:#1c1c1c;letter-spacing:-0.100px;">---</span>
<span class="t" style="left:263.3px;top:357px;font-size:5.60px;line-height:8px;color:#1c1c1c;letter-spacing:0.102px;">---</span>
<span class="t" style="left:290.793px;top:357px;font-size:5.60px;line-height:8px;color:#1c1c1c;letter-spacing:-0.100px;">b</span>
<span class="t" style="left:307.2px;top:357px;font-size:5.60px;line-height:8px;color:#1c1c1c;letter-spacing:-0.084px;">Attivo</span>
<span class="t" style="left:325.551px;top:357px;font-size:5.60px;line-height:8px;color:#1c1c1c;letter-spacing:-0.100px;">1.00</span>
<span class="t" style="left:343.601px;top:357px;font-size:5.60px;line-height:8px;color:#1c1c1c;letter-spacing:-0.100px;">1.00</span>
<span class="t" style="left:358.235px;top:357px;font-size:5.60px;line-height:8px;color:#1c1c1c;letter-spacing:-0.100px;">Da verificare</span>
<span class="t" style="left:6.02081px;top:366px;font-size:5.60px;line-height:8px;color:#1c1c1c;letter-spacing:-0.100px;">R2</span>
<span class="t" style="left:25.5929px;top:366px;font-size:5.60px;line-height:8px;color:#1c1c1c;letter-spacing:-0.100px;">2</span>
<span class="t" style="left:38.2px;top:366px;font-size:5.60px;line-height:8px;color:#1c1c1c;letter-spacing:-0.026px;">Pilastrata 2</span>
<span class="t" style="left:74.6929px;top:366px;font-size:5.60px;line-height:8px;color:#1c1c1c;letter-spacing:-0.100px;">1</span>
<span class="t" style="left:86.9718px;top:366px;font-size:5.60px;line-height:8px;color:#1c1c1c;letter-spacing:-0.100px;">C25/30</span>
<span class="t" style="left:111.039px;top:366px;font-size:5.60px;line-height:8px;color:#1c1c1c;letter-spacing:-0.100px;">B450C</span>
<span class="t" style="left:143.2px;top:366px;font-size:5.60px;line-height:8px;color:#1c1c1c;letter-spacing:0.005px;">Pil.</span>
<span class="t" style="left:165.687px;top:366px;font-size:5.60px;line-height:8px;color:#1c1c1c;letter-spacing:-0.100px;">525.00</span>
<span class="t" style="left:184.97px;top:366px;font-size:5.60px;line-height:8px;color:#1c1c1c;letter-spacing:-0.100px;">Normale</span>
<span class="t" style="left:221.7px;top:366px;font-size:5.60px;line-height:8px;color:#1c1c1c;letter-spacing:-0.065px;">---</span>
<span class="t" style="left:244.953px;top:366px;font-size:5.60px;line-height:8px;color:#1c1c1c;letter-spacing:-0.100px;">---</span>
<span class="t" style="left:263.3px;top:366px;font-size:5.60px;line-height:8px;color:#1c1c1c;letter-spacing:0.102px;">---</span>
<span class="t" style="left:290.793px;top:366px;font-size:5.60px;line-height:8px;color:#1c1c1c;letter-spacing:-0.100px;">b</span>
<span class="t" style="left:307.2px;top:366px;font-size:5.60px;line-height:8px;color:#1c1c1c;letter-spacing:-0.084px;">Attivo</span>
<span class="t" style="left:325.551px;top:366px;font-size:5.60px;line-height:8px;color:#1c1c1c;letter-spacing:-0.100px;">1.00</span>
<span class="t" style="left:343.601px;top:366px;font-size:5.60px;line-height:8px;color:#1c1c1c;letter-spacing:-0.100px;">1.00</span>
<span class="t" style="left:358.235px;top:366px;font-size:5.60px;line-height:8px;color:#1c1c1c;letter-spacing:-0.100px;">Da verificare</span>
<span class="t" style="left:6.02081px;top:375px;font-size:5.60px;line-height:8px;color:#1c1c1c;letter-spacing:-0.100px;">R3</span>
<span class="t" style="left:25.5929px;top:375px;font-size:5.60px;line-height:8px;color:#1c1c1c;letter-spacing:-0.100px;">3</span>
<span class="t" style="left:38.2px;top:375px;font-size:5.60px;line-height:8px;color:#1c1c1c;letter-spacing:-0.026px;">Pilastrata 3</span>
<span class="t" style="left:74.6929px;top:375px;font-size:5.60px;line-height:8px;color:#1c1c1c;letter-spacing:-0.100px;">1</span>
<span class="t" style="left:86.9718px;top:375px;font-size:5.60px;line-height:8px;color:#1c1c1c;letter-spacing:-0.100px;">C25/30</span>
<span class="t" style="left:111.039px;top:375px;font-size:5.60px;line-height:8px;color:#1c1c1c;letter-spacing:-0.100px;">B450C</span>
<span class="t" style="left:143.2px;top:375px;font-size:5.60px;line-height:8px;color:#1c1c1c;letter-spacing:0.005px;">Pil.</span>
<span class="t" style="left:165.687px;top:375px;font-size:5.60px;line-height:8px;color:#1c1c1c;letter-spacing:-0.100px;">525.00</span>
<span class="t" style="left:184.97px;top:375px;font-size:5.60px;line-height:8px;color:#1c1c1c;letter-spacing:-0.100px;">Normale</span>
<span class="t" style="left:221.7px;top:375px;font-size:5.60px;line-height:8px;color:#1c1c1c;letter-spacing:-0.065px;">---</span>
<span class="t" style="left:244.953px;top:375px;font-size:5.60px;line-height:8px;color:#1c1c1c;letter-spacing:-0.100px;">---</span>
<span class="t" style="left:263.3px;top:375px;font-size:5.60px;line-height:8px;color:#1c1c1c;letter-spacing:0.102px;">---</span>
<span class="t" style="left:290.793px;top:375px;font-size:5.60px;line-height:8px;color:#1c1c1c;letter-spacing:-0.100px;">b</span>
<span class="t" style="left:307.2px;top:375px;font-size:5.60px;line-height:8px;color:#1c1c1c;letter-spacing:-0.084px;">Attivo</span>
<span class="t" style="left:325.551px;top:375px;font-size:5.60px;line-height:8px;color:#1c1c1c;letter-spacing:-0.100px;">1.00</span>
<span class="t" style="left:343.601px;top:375px;font-size:5.60px;line-height:8px;color:#1c1c1c;letter-spacing:-0.100px;">1.00</span>
<span class="t" style="left:358.235px;top:375px;font-size:5.60px;line-height:8px;color:#1c1c1c;letter-spacing:-0.100px;">Da verificare</span>
<span class="t" style="left:6.02081px;top:385px;font-size:5.60px;line-height:8px;color:#1c1c1c;letter-spacing:-0.100px;">R4</span>
<span class="t" style="left:25.5929px;top:385px;font-size:5.60px;line-height:8px;color:#1c1c1c;letter-spacing:-0.100px;">4</span>
<span class="t" style="left:40.7772px;top:385px;font-size:5.60px;line-height:8px;color:#1c1c1c;letter-spacing:-0.100px;">Travata 1</span>
<span class="t" style="left:74.6929px;top:385px;font-size:5.60px;line-height:8px;color:#1c1c1c;letter-spacing:-0.100px;">2</span>
<span class="t" style="left:86.9718px;top:385px;font-size:5.60px;line-height:8px;color:#1c1c1c;letter-spacing:-0.100px;">C25/30</span>
<span class="t" style="left:111.039px;top:385px;font-size:5.60px;line-height:8px;color:#1c1c1c;letter-spacing:-0.100px;">B450C</span>
<span class="t" style="left:140.682px;top:385px;font-size:5.60px;line-height:8px;color:#1c1c1c;letter-spacing:-0.100px;">Travi</span>
<span class="t" style="left:165.687px;top:385px;font-size:5.60px;line-height:8px;color:#1c1c1c;letter-spacing:-0.100px;">400.00</span>
<span class="t" style="left:191.821px;top:385px;font-size:5.60px;line-height:8px;color:#1c1c1c;letter-spacing:-0.100px;">----</span>
<span class="t" style="left:220.871px;top:385px;font-size:5.60px;line-height:8px;color:#1c1c1c;letter-spacing:-0.100px;">----</span>
<span class="t" style="left:244.953px;top:385px;font-size:5.60px;line-height:8px;color:#1c1c1c;letter-spacing:-0.100px;">---</span>
<span class="t" style="left:255.87px;top:385px;font-size:5.60px;line-height:8px;color:#1c1c1c;letter-spacing:-0.100px;">Normale</span>
<span class="t" style="left:290.793px;top:385px;font-size:5.60px;line-height:8px;color:#1c1c1c;letter-spacing:-0.100px;">b</span>
<span class="t" style="left:307.2px;top:385px;font-size:5.60px;line-height:8px;color:#1c1c1c;letter-spacing:-0.084px;">Attivo</span>
<span class="t" style="left:325.551px;top:385px;font-size:5.60px;line-height:8px;color:#1c1c1c;letter-spacing:-0.100px;">1.00</span>
<span class="t" style="left:343.601px;top:385px;font-size:5.60px;line-height:8px;color:#1c1c1c;letter-spacing:-0.100px;">1.00</span>
<span class="t" style="left:358.235px;top:385px;font-size:5.60px;line-height:8px;color:#1c1c1c;letter-spacing:-0.100px;">Da verificare</span>
<div style="left:0;top:392.4px;width:453px;height:3px;overflow:hidden">
<span class="t" style="left:6.8px;top:1.2px;font-size:5.6px;line-height:8px;letter-spacing:-0.120px;color:#444">R5</span>
<span class="t" style="left:26.0px;top:1.2px;font-size:5.6px;line-height:8px;letter-spacing:-0.120px;color:#444">5</span>
<span class="t" style="left:41.5px;top:1.2px;font-size:5.6px;line-height:8px;letter-spacing:-0.120px;color:#444">Travata 2</span>
<span class="t" style="left:75.1px;top:1.2px;font-size:5.6px;line-height:8px;letter-spacing:-0.120px;color:#444">2</span>
<span class="t" style="left:87.8px;top:1.2px;font-size:5.6px;line-height:8px;letter-spacing:-0.120px;color:#444">C25/30</span>
<span class="t" style="left:111.4px;top:1.2px;font-size:5.6px;line-height:8px;letter-spacing:-0.120px;color:#444">B450C</span>
<span class="t" style="left:141.3px;top:1.2px;font-size:5.6px;line-height:8px;letter-spacing:-0.120px;color:#444">Travi</span>
<span class="t" style="left:166.0px;top:1.2px;font-size:5.6px;line-height:8px;letter-spacing:-0.120px;color:#444">400.00</span>
<span class="t" style="left:192.2px;top:1.2px;font-size:5.6px;line-height:8px;letter-spacing:-0.120px;color:#444">----</span>
<span class="t" style="left:221.0px;top:1.2px;font-size:5.6px;line-height:8px;letter-spacing:-0.120px;color:#444">----</span>
<span class="t" style="left:245.0px;top:1.2px;font-size:5.6px;line-height:8px;letter-spacing:-0.120px;color:#444">---</span>
<span class="t" style="left:256.2px;top:1.2px;font-size:5.6px;line-height:8px;letter-spacing:-0.120px;color:#444">Normale</span>
<span class="t" style="left:291.0px;top:1.2px;font-size:5.6px;line-height:8px;letter-spacing:-0.120px;color:#444">b</span>
<span class="t" style="left:307.2px;top:1.2px;font-size:5.6px;line-height:8px;letter-spacing:-0.084px;color:#444">Attivo</span>
<span class="t" style="left:325.9px;top:1.2px;font-size:5.6px;line-height:8px;letter-spacing:-0.120px;color:#444">1.00</span>
<span class="t" style="left:344.0px;top:1.2px;font-size:5.6px;line-height:8px;letter-spacing:-0.120px;color:#444">1.00</span>
<span class="t" style="left:358.6px;top:1.2px;font-size:5.6px;line-height:8px;letter-spacing:-0.120px;color:#444">Da verificare</span>
</div>
<div style="left:20px;top:355.8px;width:14.8px;height:9px;border:0.8px solid #222;box-sizing:border-box;"></div>
<div style="left:34px;top:364px;width:1.4px;height:1.4px;background:#222;"></div>
<div style="left:777.5px;top:346.2px;width:9px;height:48.8px;background:#f9f9fa;"></div>
<svg style="left:777.5px;top:346px" width="9" height="50" viewBox="0 0 9 50"><path d="M2.6 6l1.9-1.9 1.9 1.9" stroke="#444" stroke-width="0.8" fill="none"/><rect x="0.6" y="9.6" width="7.6" height="8" fill="#c6c6ca"/><path d="M2.6 44l1.9 1.9 1.9-1.9" stroke="#444" stroke-width="0.8" fill="none"/></svg>
<div style="left:0px;top:396px;width:800px;height:9.5px;background:#f0f0f1;"></div>
<div style="left:0px;top:396px;width:787px;height:0.6px;background:#9a9aa4;"></div>
<svg style="left:0;top:396px" width="100" height="10" viewBox="0 0 100 10"><g fill="#666"><path d="M5.6 3.4v3.2l-1.8-1.6z"/><rect x="3" y="3.4" width="0.5" height="3.2"/><path d="M12.6 3.4v3.2l-1.8-1.6z"/><path d="M18.6 3.4v3.2l1.8-1.6z"/><path d="M25 3.4v3.2l1.8-1.6z"/><rect x="27.2" y="3.4" width="0.5" height="3.2"/></g><path d="M30.4 0.3l3.4 8.2c0.2 0.5 0.6 0.7 1.2 0.7h49.2c0.6 0 1-0.2 1.2-0.7l3.2-8.2" fill="#ffffff" stroke="#444" stroke-width="0.6"/><rect x="30.8" y="-0.2" width="57.4" height="0.9" fill="#ffffff"/></svg>
<span class="t" style="left:36px;top:397px;font-size:5.30px;line-height:8px;color:#111;letter-spacing:0.329px;font-weight:bold;">NTC18C-Modello</span>
<svg style="left:398px;top:396.6px" width="380" height="9" viewBox="0 0 380 9"><path d="M2 1v7" stroke="#666" stroke-width="0.6" stroke-dasharray="0.7 0.9"/><path d="M10.2 2.8v3.4l-2.2-1.7z" fill="#444"/><rect x="13.6" y="2.4" width="8.6" height="4.2" fill="#c8cce0"/><path d="M373.6 2.8v3.4l2.2-1.7z" fill="#444"/></svg>
<svg style="left:0;top:405.5px" width="230" height="12.5" viewBox="0 0 230 12.5"><path d="M1.2 1.5v9.5" stroke="#b4b4c0" stroke-width="0.9" stroke-dasharray="0.8 0.8"/><rect x="3.4" y="2.4" width="5.4" height="5" fill="#f6f6fa" stroke="#8a8a94" stroke-width="0.6"/><path d="M3.4 4h5.4M5.2 2.4v5" stroke="#8a8a94" stroke-width="0.4"/><circle cx="8.6" cy="7.2" r="1.9" fill="#eef" stroke="#666" stroke-width="0.6"/><path d="M9.9 8.6l1.8 1.9" stroke="#666" stroke-width="0.8"/><path d="M15.6 1.5v9.5" stroke="#c6c6d0" stroke-width="0.4"/><g stroke="#b4b4bc" stroke-width="0.6" fill="none"><path d="M22.4 4.2l3 3M25.4 4.2l-3 3M22 8.6h5.6M27.6 8.6v-1.6"/><path d="M34.4 4.2l3 3M37.4 4.2l-3 3M34 8.6h5.6M39.6 8.6v-1.6"/></g><path d="M44.6 1.5v9.5" stroke="#c6c6d0" stroke-width="0.4"/><path d="M111 1.5v9.5M139.6 1.5v9.5" stroke="#c6c6d0" stroke-width="0.4"/><path d="M212.6 8.6h3l-1.5 1.7z" fill="#444"/></svg>
<span class="t" style="left:50px;top:409px;font-size:5.80px;line-height:8px;color:#8a8a8a;letter-spacing:0.005px;">4725.00</span>
<span class="t" style="left:116px;top:410px;font-size:4.40px;line-height:8px;color:#a8a8b0;letter-spacing:0.269px;">Max  Min</span>
<span class="t" style="left:143px;top:409px;font-size:5.40px;line-height:8px;color:#a4a4b0;letter-spacing:0.198px;">V1</span>
<span class="t" style="left:155px;top:409px;font-size:5.40px;line-height:8px;color:#a4a4b0;">M1</span>
<span class="t" style="left:167px;top:409px;font-size:5.40px;line-height:8px;color:#a4a4b0;letter-spacing:0.448px;">V2</span>
<span class="t" style="left:179px;top:409px;font-size:5.40px;line-height:8px;color:#a4a4b0;letter-spacing:0.250px;">M2</span>
<span class="t" style="left:191.5px;top:409px;font-size:5.40px;line-height:8px;color:#a4a4b0;letter-spacing:0.050px;">AF</span>
<span class="t" style="left:201.952px;top:409px;font-size:5.40px;line-height:8px;color:#a4a4b0;letter-spacing:-0.100px;">MT</span>
<svg style="left:0;top:0" width="800" height="418" viewBox="0 0 800 418"><polygon points="302.1,206.4 416.9,165.6 416.9,169.7 302.1,210.5" fill="#00f4f4"/><polygon points="294.9,201.4 409.7,160.6 416.9,165.6 302.1,206.4" fill="#00ffff"/><path d="M294.9 201.4L302.1 206.4v4.1M314.1 194.6L321.2 199.6v4.1M333.2 187.8L340.3 192.8v4.1M352.3 181.0L359.5 186.0v4.1M371.5 174.2L378.6 179.2v4.1M390.6 167.4L397.7 172.4v4.1M409.7 160.6L416.9 165.6v4.1M302.1 206.4L416.9 165.6" stroke="#2f8f8f" stroke-width="0.45" fill="none"/><polygon points="408.7,164.7 530.4,250.5 530.4,254.6 408.7,168.8" fill="#00f4f4"/><polygon points="417.9,161.5 539.5,247.3 530.4,250.5 408.7,164.7" fill="#00ffff"/><path d="M417.9 161.5L408.7 164.7v4.1M431.4 171.0L422.2 174.3v4.1M444.9 180.5L435.7 183.8v4.1M458.4 190.1L449.3 193.3v4.1M472.0 199.6L462.8 202.9v4.1M485.5 209.1L476.3 212.4v4.1M499.0 218.7L489.8 221.9v4.1M512.5 228.2L503.3 231.5v4.1M526.0 237.7L516.8 241.0v4.1M539.5 247.3L530.4 250.5v4.1M408.7 164.7L530.4 250.5" stroke="#2f8f8f" stroke-width="0.45" fill="none"/><polygon points="342.6,235.0 457.4,194.2 457.4,198.3 342.6,239.1" fill="#00f4f4"/><polygon points="335.5,230.0 450.3,189.2 457.4,194.2 342.6,235.0" fill="#00ffff"/><path d="M335.5 230.0L342.6 235.0v4.1M354.6 223.2L361.8 228.2v4.1M373.7 216.4L380.9 221.4v4.1M392.9 209.6L400.0 214.6v4.1M412.0 202.8L419.2 207.8v4.1M431.1 196.0L438.3 201.0v4.1M450.3 189.2L457.4 194.2v4.1M342.6 235.0L457.4 194.2" stroke="#2f8f8f" stroke-width="0.45" fill="none"/><polygon points="351.3,185.1 473.0,270.9 473.0,275.0 351.3,189.2" fill="#00f4f4"/><polygon points="360.5,181.9 482.1,267.7 473.0,270.9 351.3,185.1" fill="#00ffff"/><path d="M360.5 181.9L351.3 185.1v4.1M374.0 191.4L364.8 194.7v4.1M387.5 200.9L378.3 204.2v4.1M401.0 210.5L391.9 213.7v4.1M414.6 220.0L405.4 223.3v4.1M428.1 229.5L418.9 232.8v4.1M441.6 239.1L432.4 242.3v4.1M455.1 248.6L445.9 251.9v4.1M468.6 258.1L459.4 261.4v4.1M482.1 267.7L473.0 270.9v4.1M351.3 185.1L473.0 270.9" stroke="#2f8f8f" stroke-width="0.45" fill="none"/><polygon points="383.2,263.6 498.0,222.8 498.0,226.9 383.2,267.7" fill="#00f4f4"/><polygon points="376.0,258.6 490.8,217.8 498.0,222.8 383.2,263.6" fill="#00ffff"/><path d="M376.0 258.6L383.2 263.6v4.1M395.2 251.8L402.3 256.8v4.1M414.3 245.0L421.4 250.0v4.1M433.4 238.2L440.6 243.2v4.1M452.6 231.4L459.7 236.4v4.1M471.7 224.6L478.8 229.6v4.1M490.8 217.8L498.0 222.8v4.1M383.2 263.6L498.0 222.8" stroke="#2f8f8f" stroke-width="0.45" fill="none"/><polygon points="293.9,205.5 415.6,291.3 415.6,295.4 293.9,209.6" fill="#00f4f4"/><polygon points="303.1,202.3 424.7,288.1 415.6,291.3 293.9,205.5" fill="#00ffff"/><path d="M303.1 202.3L293.9 205.5v4.1M316.6 211.8L307.4 215.1v4.1M330.1 221.3L320.9 224.6v4.1M343.6 230.9L334.5 234.1v4.1M357.2 240.4L348.0 243.7v4.1M370.7 249.9L361.5 253.2v4.1M384.2 259.5L375.0 262.7v4.1M397.7 269.0L388.5 272.3v4.1M411.2 278.5L402.0 281.8v4.1M424.7 288.1L415.6 291.3v4.1M293.9 205.5L415.6 291.3" stroke="#2f8f8f" stroke-width="0.45" fill="none"/><polygon points="423.7,292.2 538.5,251.4 538.5,255.5 423.7,296.3" fill="#00f4f4"/><polygon points="416.6,287.2 531.4,246.4 538.5,251.4 423.7,292.2" fill="#00ffff"/><path d="M416.6 287.2L423.7 292.2v4.1M435.7 280.4L442.9 285.4v4.1M454.8 273.6L462.0 278.6v4.1M474.0 266.8L481.1 271.8v4.1M493.1 260.0L500.3 265.0v4.1M512.2 253.2L519.4 258.2v4.1M531.4 246.4L538.5 251.4v4.1M423.7 292.2L538.5 251.4" stroke="#2f8f8f" stroke-width="0.45" fill="none"/><rect x="416.8" y="288.2" width="6.4" height="8.2" fill="#00ffff"/><path d="M415.7 132.4l4.3 1.9M415.7 135.0l4.3 1.9M415.7 137.6l4.3 1.9M415.7 140.2l4.3 1.9M415.7 142.8l4.3 1.9M415.7 145.4l4.3 1.9M415.7 148.0l4.3 1.9M415.7 150.6l4.3 1.9M415.7 153.2l4.3 1.9M415.7 155.8l4.3 1.9M415.7 158.4l4.3 1.9M415.7 161.0l4.3 1.9M420.0 134.3V164.3L415.7 162.4" stroke="#e00000" stroke-width="0.45" fill="none" opacity="0.85"/><rect x="410.9" y="123.2" width="4.8" height="40.2" fill="#0000ff"/><path d="M412.6 123.2V163.4" stroke="#3030ff" stroke-width="0.5"/><polygon points="412.7,122.7 415.7,122.7 415.7,130.4 412.7,129.6" fill="#ff0000"/><path d="M415.7 94.1l2.2 1.0M415.7 96.7l2.2 1.0M415.7 99.3l2.2 1.0M415.7 101.9l2.2 1.0M415.7 104.5l2.2 1.0M415.7 107.1l2.2 1.0M415.7 109.7l2.2 1.0M415.7 112.3l2.2 1.0M415.7 114.9l2.2 1.0M415.7 117.5l2.2 1.0M415.7 120.1l2.2 1.0M417.9 95.1V123.4L415.7 122.4" stroke="#e00000" stroke-width="0.45" fill="none" opacity="0.85"/><rect x="410.9" y="88.5" width="4.8" height="34.9" fill="#0000ff"/><path d="M412.6 88.5V123.4" stroke="#3030ff" stroke-width="0.5"/><path d="M358.5 152.8l8.6 3.9M358.5 155.4l8.6 3.9M358.5 158.0l8.6 3.9M358.5 160.6l8.6 3.9M358.5 163.2l8.6 3.9M358.5 165.8l8.6 3.9M358.5 168.4l8.6 3.9M358.5 171.0l8.6 3.9M358.5 173.6l8.6 3.9M358.5 176.2l8.6 3.9M358.5 178.8l8.6 3.9M358.5 181.4l8.6 3.9M367.1 156.7V186.7L358.5 182.8" stroke="#e00000" stroke-width="0.45" fill="none" opacity="0.85"/><rect x="353.2" y="143.6" width="5.3" height="40.2" fill="#0000ff"/><path d="M355.2 143.6V183.8" stroke="#3030ff" stroke-width="0.5"/><path d="M456.4 161.0l8.6 3.9M456.4 163.6l8.6 3.9M456.4 166.2l8.6 3.9M456.4 168.8l8.6 3.9M456.4 171.4l8.6 3.9M456.4 174.0l8.6 3.9M456.4 176.6l8.6 3.9M456.4 179.2l8.6 3.9M456.4 181.8l8.6 3.9M456.4 184.4l8.6 3.9M456.4 187.0l8.6 3.9M456.4 189.6l8.6 3.9M465.0 164.9V194.9L456.4 191.0" stroke="#e00000" stroke-width="0.45" fill="none" opacity="0.85"/><rect x="451.4" y="151.8" width="5.0" height="40.2" fill="#0000ff"/><path d="M453.2 151.8V192.0" stroke="#3030ff" stroke-width="0.5"/><polygon points="410.9,88.0 413.0,84.4 415.7,84.4 415.7,92.1 410.9,90.8" fill="#ff0000"/><polygon points="352.5,144.4 409.9,124.0 416.7,128.8 359.3,149.2" fill="#ff0000"/><path d="M355.0 146.2L412.4 125.8" stroke="#ff8a8a" stroke-width="0.4" opacity="0.7"/><polygon points="416.5,125.3 457.1,153.8 450.6,156.2 410.1,127.5" fill="#ff0000"/><path d="M413.9 126.2L454.5 154.8" stroke="#ff8a8a" stroke-width="0.4" opacity="0.7"/><path d="M358.5 114.5l4.4 2.0M358.5 117.1l4.4 2.0M358.5 119.7l4.4 2.0M358.5 122.3l4.4 2.0M358.5 124.9l4.4 2.0M358.5 127.5l4.4 2.0M358.5 130.1l4.4 2.0M358.5 132.7l4.4 2.0M358.5 135.3l4.4 2.0M358.5 137.9l4.4 2.0M358.5 140.5l4.4 2.0M362.9 116.5V144.8L358.5 142.8" stroke="#e00000" stroke-width="0.45" fill="none" opacity="0.85"/><rect x="353.2" y="108.9" width="5.3" height="34.9" fill="#0000ff"/><path d="M355.2 108.9V143.8" stroke="#3030ff" stroke-width="0.5"/><path d="M456.4 122.7l4.4 2.0M456.4 125.3l4.4 2.0M456.4 127.9l4.4 2.0M456.4 130.5l4.4 2.0M456.4 133.1l4.4 2.0M456.4 135.7l4.4 2.0M456.4 138.3l4.4 2.0M456.4 140.9l4.4 2.0M456.4 143.5l4.4 2.0M456.4 146.1l4.4 2.0M456.4 148.7l4.4 2.0M460.8 124.7V153.0L456.4 151.0" stroke="#e00000" stroke-width="0.45" fill="none" opacity="0.85"/><rect x="451.4" y="117.1" width="5.0" height="34.9" fill="#0000ff"/><path d="M453.2 117.1V152.0" stroke="#3030ff" stroke-width="0.5"/><path d="M301.4 173.2l4.3 1.9M301.4 175.8l4.3 1.9M301.4 178.4l4.3 1.9M301.4 181.0l4.3 1.9M301.4 183.6l4.3 1.9M301.4 186.2l4.3 1.9M301.4 188.8l4.3 1.9M301.4 191.4l4.3 1.9M301.4 194.0l4.3 1.9M301.4 196.6l4.3 1.9M301.4 199.2l4.3 1.9M301.4 201.8l4.3 1.9M305.7 175.1V205.1L301.4 203.2" stroke="#e00000" stroke-width="0.45" fill="none" opacity="0.85"/><rect x="295.6" y="164.0" width="5.8" height="40.2" fill="#0000ff"/><path d="M297.8 164.0V204.2" stroke="#3030ff" stroke-width="0.5"/><path d="M399.1 181.4l17.2 7.7M399.1 184.0l17.2 7.7M399.1 186.6l17.2 7.7M399.1 189.2l17.2 7.7M399.1 191.8l17.2 7.7M399.1 194.4l17.2 7.7M399.1 197.0l17.2 7.7M399.1 199.6l17.2 7.7M399.1 202.2l17.2 7.7M399.1 204.8l17.2 7.7M399.1 207.4l17.2 7.7M399.1 210.0l17.2 7.7M416.3 189.1V219.1L399.1 211.4" stroke="#e00000" stroke-width="0.45" fill="none" opacity="0.85"/><rect x="393.8" y="172.2" width="5.4" height="40.2" fill="#0000ff"/><path d="M395.8 172.2V212.4" stroke="#3030ff" stroke-width="0.5"/><path d="M497.0 189.6l8.6 3.9M497.0 192.2l8.6 3.9M497.0 194.8l8.6 3.9M497.0 197.4l8.6 3.9M497.0 200.0l8.6 3.9M497.0 202.6l8.6 3.9M497.0 205.2l8.6 3.9M497.0 207.8l8.6 3.9M497.0 210.4l8.6 3.9M497.0 213.0l8.6 3.9M497.0 215.6l8.6 3.9M497.0 218.2l8.6 3.9M505.6 193.5V223.5L497.0 219.6" stroke="#e00000" stroke-width="0.45" fill="none" opacity="0.85"/><rect x="491.8" y="180.4" width="5.2" height="40.2" fill="#0000ff"/><path d="M493.7 180.4V220.6" stroke="#3030ff" stroke-width="0.5"/><polygon points="352.5,106.1 409.9,85.7 416.7,90.5 359.3,110.9" fill="#ff0000"/><path d="M355.0 107.9L412.4 87.5" stroke="#ff8a8a" stroke-width="0.4" opacity="0.7"/><polygon points="416.5,87.0 457.1,115.5 450.6,117.9 410.1,89.2" fill="#ff0000"/><path d="M413.9 87.9L454.5 116.5" stroke="#ff8a8a" stroke-width="0.4" opacity="0.7"/><polygon points="297.9,163.5 301.4,163.5 301.4,171.2 297.9,170.4" fill="#ff0000"/><polygon points="295.1,164.8 352.5,144.4 359.3,149.2 301.9,169.6" fill="#ff0000"/><path d="M297.6 166.6L355.0 146.2" stroke="#ff8a8a" stroke-width="0.4" opacity="0.7"/><polygon points="393.4,173.3 450.8,152.9 456.9,157.1 399.5,177.5" fill="#00ff00"/><path d="M395.7 174.9L453.1 154.5" stroke="#a8ffa8" stroke-width="0.4" opacity="0.7"/><polygon points="359.4,145.6 399.9,174.2 393.0,176.6 352.4,148.0" fill="#ff0000"/><path d="M356.6 146.6L397.1 175.2" stroke="#ff8a8a" stroke-width="0.4" opacity="0.7"/><polygon points="457.1,153.8 497.9,182.3 490.9,184.9 450.6,156.2" fill="#ff0000"/><path d="M454.5 154.8L495.1 183.3" stroke="#ff8a8a" stroke-width="0.4" opacity="0.7"/><path d="M301.4 134.9l2.2 1.0M301.4 137.5l2.2 1.0M301.4 140.1l2.2 1.0M301.4 142.7l2.2 1.0M301.4 145.3l2.2 1.0M301.4 147.9l2.2 1.0M301.4 150.5l2.2 1.0M301.4 153.1l2.2 1.0M301.4 155.7l2.2 1.0M301.4 158.3l2.2 1.0M301.4 160.9l2.2 1.0M303.6 135.9V164.2L301.4 163.2" stroke="#e00000" stroke-width="0.45" fill="none" opacity="0.85"/><rect x="295.6" y="129.3" width="5.8" height="34.9" fill="#0000ff"/><path d="M297.8 129.3V164.2" stroke="#3030ff" stroke-width="0.5"/><path d="M399.1 143.1l8.8 4.0M399.1 145.7l8.8 4.0M399.1 148.3l8.8 4.0M399.1 150.9l8.8 4.0M399.1 153.5l8.8 4.0M399.1 156.1l8.8 4.0M399.1 158.7l8.8 4.0M399.1 161.3l8.8 4.0M399.1 163.9l8.8 4.0M399.1 166.5l8.8 4.0M399.1 169.1l8.8 4.0M407.9 147.1V175.4L399.1 171.4" stroke="#e00000" stroke-width="0.45" fill="none" opacity="0.85"/><rect x="393.8" y="137.5" width="5.4" height="34.9" fill="#0000ff"/><path d="M395.8 137.5V172.4" stroke="#3030ff" stroke-width="0.5"/><path d="M497.0 151.3l4.4 2.0M497.0 153.9l4.4 2.0M497.0 156.5l4.4 2.0M497.0 159.1l4.4 2.0M497.0 161.7l4.4 2.0M497.0 164.3l4.4 2.0M497.0 166.9l4.4 2.0M497.0 169.5l4.4 2.0M497.0 172.1l4.4 2.0M497.0 174.7l4.4 2.0M497.0 177.3l4.4 2.0M501.4 153.3V181.6L497.0 179.6" stroke="#e00000" stroke-width="0.45" fill="none" opacity="0.85"/><rect x="491.8" y="145.7" width="5.2" height="34.9" fill="#0000ff"/><path d="M493.7 145.7V180.6" stroke="#3030ff" stroke-width="0.5"/><path d="M341.9 201.8l8.6 3.9M341.9 204.4l8.6 3.9M341.9 207.0l8.6 3.9M341.9 209.6l8.6 3.9M341.9 212.2l8.6 3.9M341.9 214.8l8.6 3.9M341.9 217.4l8.6 3.9M341.9 220.0l8.6 3.9M341.9 222.6l8.6 3.9M341.9 225.2l8.6 3.9M341.9 227.8l8.6 3.9M341.9 230.4l8.6 3.9M350.6 205.7V235.7L341.9 231.8" stroke="#e00000" stroke-width="0.45" fill="none" opacity="0.85"/><rect x="336.2" y="192.6" width="5.8" height="40.2" fill="#0000ff"/><path d="M338.4 192.6V232.8" stroke="#3030ff" stroke-width="0.5"/><path d="M439.8 210.0l17.2 7.7M439.8 212.6l17.2 7.7M439.8 215.2l17.2 7.7M439.8 217.8l17.2 7.7M439.8 220.4l17.2 7.7M439.8 223.0l17.2 7.7M439.8 225.6l17.2 7.7M439.8 228.2l17.2 7.7M439.8 230.8l17.2 7.7M439.8 233.4l17.2 7.7M439.8 236.0l17.2 7.7M439.8 238.6l17.2 7.7M456.9 217.7V247.7L439.8 240.0" stroke="#e00000" stroke-width="0.45" fill="none" opacity="0.85"/><rect x="434.2" y="200.8" width="5.5" height="40.2" fill="#0000ff"/><path d="M436.3 200.8V241.0" stroke="#3030ff" stroke-width="0.5"/><path d="M537.7 218.2l4.3 1.9M537.7 220.8l4.3 1.9M537.7 223.4l4.3 1.9M537.7 226.0l4.3 1.9M537.7 228.6l4.3 1.9M537.7 231.2l4.3 1.9M537.7 233.8l4.3 1.9M537.7 236.4l4.3 1.9M537.7 239.0l4.3 1.9M537.7 241.6l4.3 1.9M537.7 244.2l4.3 1.9M537.7 246.8l4.3 1.9M542.0 220.1V250.1L537.7 248.2" stroke="#e00000" stroke-width="0.45" fill="none" opacity="0.85"/><rect x="532.2" y="209.0" width="5.4" height="40.2" fill="#0000ff"/><path d="M534.2 209.0V249.2" stroke="#3030ff" stroke-width="0.5"/><polygon points="295.6,128.8 297.7,125.2 301.4,125.2 301.4,132.9 295.6,131.6" fill="#ff0000"/><polygon points="295.1,126.5 352.5,106.1 359.3,110.9 301.9,131.3" fill="#ff0000"/><path d="M297.6 128.3L355.0 107.9" stroke="#ff8a8a" stroke-width="0.4" opacity="0.7"/><polygon points="393.4,135.0 450.8,114.6 456.9,118.8 399.5,139.2" fill="#00ff00"/><path d="M395.7 136.6L453.1 116.2" stroke="#a8ffa8" stroke-width="0.4" opacity="0.7"/><polygon points="359.4,107.3 399.9,135.9 393.0,138.3 352.4,109.7" fill="#ff0000"/><path d="M356.6 108.3L397.1 136.9" stroke="#ff8a8a" stroke-width="0.4" opacity="0.7"/><polygon points="457.1,115.5 497.9,144.0 490.9,146.6 450.6,117.9" fill="#ff0000"/><path d="M454.5 116.5L495.1 145.0" stroke="#ff8a8a" stroke-width="0.4" opacity="0.7"/><polygon points="534.4,208.5 537.7,208.5 537.7,216.2 534.4,215.4" fill="#ff0000"/><polygon points="336.0,193.7 393.4,173.3 399.5,177.5 342.1,197.9" fill="#00ff00"/><path d="M338.3 195.3L395.7 174.9" stroke="#a8ffa8" stroke-width="0.4" opacity="0.7"/><polygon points="434.0,201.9 491.4,181.5 497.4,185.7 440.0,206.1" fill="#00ff00"/><path d="M436.2 203.5L493.6 183.1" stroke="#a8ffa8" stroke-width="0.4" opacity="0.7"/><polygon points="302.9,165.6 343.4,194.2 334.7,197.4 294.1,168.8" fill="#ff0000"/><path d="M299.4 166.9L339.9 195.5" stroke="#ff8a8a" stroke-width="0.4" opacity="0.7"/><polygon points="399.9,174.2 440.6,202.7 433.4,205.3 393.0,176.6" fill="#ff0000"/><path d="M397.1 175.2L437.7 203.7" stroke="#ff8a8a" stroke-width="0.4" opacity="0.7"/><polygon points="497.9,182.3 539.3,210.7 530.6,213.7 490.9,184.9" fill="#ff0000"/><path d="M495.1 183.3L535.8 211.9" stroke="#ff8a8a" stroke-width="0.4" opacity="0.7"/><path d="M341.9 163.5l4.4 2.0M341.9 166.1l4.4 2.0M341.9 168.7l4.4 2.0M341.9 171.3l4.4 2.0M341.9 173.9l4.4 2.0M341.9 176.5l4.4 2.0M341.9 179.1l4.4 2.0M341.9 181.7l4.4 2.0M341.9 184.3l4.4 2.0M341.9 186.9l4.4 2.0M341.9 189.5l4.4 2.0M346.3 165.5V193.8L341.9 191.8" stroke="#e00000" stroke-width="0.45" fill="none" opacity="0.85"/><rect x="336.2" y="157.9" width="5.8" height="34.9" fill="#0000ff"/><path d="M338.4 157.9V192.8" stroke="#3030ff" stroke-width="0.5"/><path d="M439.8 171.7l8.8 4.0M439.8 174.3l8.8 4.0M439.8 176.9l8.8 4.0M439.8 179.5l8.8 4.0M439.8 182.1l8.8 4.0M439.8 184.7l8.8 4.0M439.8 187.3l8.8 4.0M439.8 189.9l8.8 4.0M439.8 192.5l8.8 4.0M439.8 195.1l8.8 4.0M439.8 197.7l8.8 4.0M448.6 175.7V204.0L439.8 200.0" stroke="#e00000" stroke-width="0.45" fill="none" opacity="0.85"/><rect x="434.2" y="166.1" width="5.5" height="34.9" fill="#0000ff"/><path d="M436.3 166.1V201.0" stroke="#3030ff" stroke-width="0.5"/><path d="M537.7 179.9l2.2 1.0M537.7 182.5l2.2 1.0M537.7 185.1l2.2 1.0M537.7 187.7l2.2 1.0M537.7 190.3l2.2 1.0M537.7 192.9l2.2 1.0M537.7 195.5l2.2 1.0M537.7 198.1l2.2 1.0M537.7 200.7l2.2 1.0M537.7 203.3l2.2 1.0M537.7 205.9l2.2 1.0M539.9 180.9V209.2L537.7 208.2" stroke="#e00000" stroke-width="0.45" fill="none" opacity="0.85"/><rect x="532.2" y="174.3" width="5.4" height="34.9" fill="#0000ff"/><path d="M534.2 174.3V209.2" stroke="#3030ff" stroke-width="0.5"/><path d="M382.5 230.4l8.6 3.9M382.5 233.0l8.6 3.9M382.5 235.6l8.6 3.9M382.5 238.2l8.6 3.9M382.5 240.8l8.6 3.9M382.5 243.4l8.6 3.9M382.5 246.0l8.6 3.9M382.5 248.6l8.6 3.9M382.5 251.2l8.6 3.9M382.5 253.8l8.6 3.9M382.5 256.4l8.6 3.9M382.5 259.0l8.6 3.9M391.1 234.3V264.3L382.5 260.4" stroke="#e00000" stroke-width="0.45" fill="none" opacity="0.85"/><rect x="376.7" y="221.2" width="5.8" height="40.2" fill="#0000ff"/><path d="M378.9 221.2V261.4" stroke="#3030ff" stroke-width="0.5"/><path d="M480.3 238.6l8.6 3.9M480.3 241.2l8.6 3.9M480.3 243.8l8.6 3.9M480.3 246.4l8.6 3.9M480.3 249.0l8.6 3.9M480.3 251.6l8.6 3.9M480.3 254.2l8.6 3.9M480.3 256.8l8.6 3.9M480.3 259.4l8.6 3.9M480.3 262.0l8.6 3.9M480.3 264.6l8.6 3.9M480.3 267.2l8.6 3.9M488.9 242.5V272.5L480.3 268.6" stroke="#e00000" stroke-width="0.45" fill="none" opacity="0.85"/><rect x="474.7" y="229.4" width="5.6" height="40.2" fill="#0000ff"/><path d="M476.8 229.4V269.6" stroke="#3030ff" stroke-width="0.5"/><polygon points="532.2,173.8 534.4,170.2 537.7,170.2 537.7,177.9 532.2,176.6" fill="#ff0000"/><polygon points="336.0,155.4 393.4,135.0 399.5,139.2 342.1,159.6" fill="#00ff00"/><path d="M338.3 157.0L395.7 136.6" stroke="#a8ffa8" stroke-width="0.4" opacity="0.7"/><polygon points="434.0,163.6 491.4,143.2 497.4,147.4 440.0,167.8" fill="#00ff00"/><path d="M436.2 165.2L493.6 144.8" stroke="#a8ffa8" stroke-width="0.4" opacity="0.7"/><polygon points="302.9,127.3 343.4,155.9 334.7,159.1 294.1,130.5" fill="#ff0000"/><path d="M299.4 128.6L339.9 157.2" stroke="#ff8a8a" stroke-width="0.4" opacity="0.7"/><polygon points="399.9,135.9 440.6,164.4 433.4,167.0 393.0,138.3" fill="#ff0000"/><path d="M397.1 136.9L437.7 165.4" stroke="#ff8a8a" stroke-width="0.4" opacity="0.7"/><polygon points="497.9,144.0 539.3,172.4 530.6,175.4 490.9,146.6" fill="#ff0000"/><path d="M495.1 145.0L535.8 173.6" stroke="#ff8a8a" stroke-width="0.4" opacity="0.7"/><polygon points="376.6,222.3 434.0,201.9 440.0,206.1 382.6,226.5" fill="#00ff00"/><path d="M378.8 223.9L436.2 203.5" stroke="#a8ffa8" stroke-width="0.4" opacity="0.7"/><polygon points="474.1,230.2 531.5,209.8 538.4,214.6 481.0,235.0" fill="#ff0000"/><path d="M476.7 232.0L534.1 211.6" stroke="#ff8a8a" stroke-width="0.4" opacity="0.7"/><polygon points="343.4,194.2 383.9,222.9 375.3,225.9 334.7,197.4" fill="#ff0000"/><path d="M339.9 195.5L380.5 224.1" stroke="#ff8a8a" stroke-width="0.4" opacity="0.7"/><polygon points="440.6,202.7 481.2,231.3 473.9,233.9 433.4,205.3" fill="#ff0000"/><path d="M437.7 203.7L478.3 232.3" stroke="#ff8a8a" stroke-width="0.4" opacity="0.7"/><rect x="336.2" y="197.2" width="5.8" height="4.2" fill="#0000ff"/><path d="M382.5 192.1l4.4 2.0M382.5 194.7l4.4 2.0M382.5 197.3l4.4 2.0M382.5 199.9l4.4 2.0M382.5 202.5l4.4 2.0M382.5 205.1l4.4 2.0M382.5 207.7l4.4 2.0M382.5 210.3l4.4 2.0M382.5 212.9l4.4 2.0M382.5 215.5l4.4 2.0M382.5 218.1l4.4 2.0M386.9 194.1V222.4L382.5 220.4" stroke="#e00000" stroke-width="0.45" fill="none" opacity="0.85"/><rect x="376.7" y="186.5" width="5.8" height="34.9" fill="#0000ff"/><path d="M378.9 186.5V221.4" stroke="#3030ff" stroke-width="0.5"/><path d="M480.3 200.3l4.4 2.0M480.3 202.9l4.4 2.0M480.3 205.5l4.4 2.0M480.3 208.1l4.4 2.0M480.3 210.7l4.4 2.0M480.3 213.3l4.4 2.0M480.3 215.9l4.4 2.0M480.3 218.5l4.4 2.0M480.3 221.1l4.4 2.0M480.3 223.7l4.4 2.0M480.3 226.3l4.4 2.0M484.7 202.3V230.6L480.3 228.6" stroke="#e00000" stroke-width="0.45" fill="none" opacity="0.85"/><rect x="474.7" y="194.7" width="5.6" height="34.9" fill="#0000ff"/><path d="M476.8 194.7V229.6" stroke="#3030ff" stroke-width="0.5"/><path d="M423.0 259.0l4.3 1.9M423.0 261.6l4.3 1.9M423.0 264.2l4.3 1.9M423.0 266.8l4.3 1.9M423.0 269.4l4.3 1.9M423.0 272.0l4.3 1.9M423.0 274.6l4.3 1.9M423.0 277.2l4.3 1.9M423.0 279.8l4.3 1.9M423.0 282.4l4.3 1.9M423.0 285.0l4.3 1.9M423.0 287.6l4.3 1.9M423.0 290.2l4.3 1.9M427.3 260.9V293.6L423.0 291.7" stroke="#e00000" stroke-width="0.45" fill="none" opacity="0.85"/><rect x="417.2" y="249.8" width="5.8" height="42.9" fill="#0000ff"/><path d="M419.4 249.8V292.7" stroke="#3030ff" stroke-width="0.5"/><polygon points="376.6,184.0 434.0,163.6 440.0,167.8 382.6,188.2" fill="#00ff00"/><path d="M378.8 185.6L436.2 165.2" stroke="#a8ffa8" stroke-width="0.4" opacity="0.7"/><polygon points="474.1,191.9 531.5,171.5 538.4,176.3 481.0,196.7" fill="#ff0000"/><path d="M476.7 193.7L534.1 173.3" stroke="#ff8a8a" stroke-width="0.4" opacity="0.7"/><polygon points="343.4,155.9 383.9,184.6 375.3,187.6 334.7,159.1" fill="#ff0000"/><path d="M339.9 157.2L380.5 185.8" stroke="#ff8a8a" stroke-width="0.4" opacity="0.7"/><polygon points="440.6,164.4 481.2,193.0 473.9,195.6 433.4,167.0" fill="#ff0000"/><path d="M437.7 165.4L478.3 194.0" stroke="#ff8a8a" stroke-width="0.4" opacity="0.7"/><rect x="336.2" y="158.9" width="5.8" height="4.2" fill="#0000ff"/><polygon points="419.5,249.3 423.0,249.3 423.0,257.0 419.5,256.2" fill="#ff0000"/><polygon points="416.7,250.6 474.1,230.2 481.0,235.0 423.6,255.4" fill="#ff0000"/><path d="M419.3 252.4L476.7 232.0" stroke="#ff8a8a" stroke-width="0.4" opacity="0.7"/><polygon points="383.9,222.9 424.4,251.5 415.9,254.5 375.3,225.9" fill="#ff0000"/><path d="M380.5 224.1L421.0 252.7" stroke="#ff8a8a" stroke-width="0.4" opacity="0.7"/><rect x="376.7" y="225.8" width="5.8" height="4.2" fill="#0000ff"/><rect x="474.7" y="228.4" width="5.6" height="9.8" fill="#0000ff"/><path d="M423.0 220.7l2.2 1.0M423.0 223.3l2.2 1.0M423.0 225.9l2.2 1.0M423.0 228.5l2.2 1.0M423.0 231.1l2.2 1.0M423.0 233.7l2.2 1.0M423.0 236.3l2.2 1.0M423.0 238.9l2.2 1.0M423.0 241.5l2.2 1.0M423.0 244.1l2.2 1.0M423.0 246.7l2.2 1.0M425.2 221.7V250.0L423.0 249.0" stroke="#e00000" stroke-width="0.45" fill="none" opacity="0.85"/><rect x="417.2" y="215.1" width="5.8" height="34.9" fill="#0000ff"/><path d="M419.4 215.1V250.0" stroke="#3030ff" stroke-width="0.5"/><polygon points="417.2,214.6 419.4,211.0 423.0,211.0 423.0,218.7 417.2,217.4" fill="#ff0000"/><polygon points="416.7,212.3 474.1,191.9 481.0,196.7 423.6,217.1" fill="#ff0000"/><path d="M419.3 214.1L476.7 193.7" stroke="#ff8a8a" stroke-width="0.4" opacity="0.7"/><polygon points="383.9,184.6 424.4,213.2 415.9,216.2 375.3,187.6" fill="#ff0000"/><path d="M380.5 185.8L421.0 214.4" stroke="#ff8a8a" stroke-width="0.4" opacity="0.7"/><rect x="376.7" y="187.5" width="5.8" height="4.2" fill="#0000ff"/><rect x="474.7" y="190.1" width="5.6" height="9.8" fill="#0000ff"/><rect x="417.2" y="254.4" width="5.8" height="4.2" fill="#0000ff"/><rect x="417.2" y="216.1" width="5.8" height="4.2" fill="#0000ff"/></svg>
</div></body></html>
